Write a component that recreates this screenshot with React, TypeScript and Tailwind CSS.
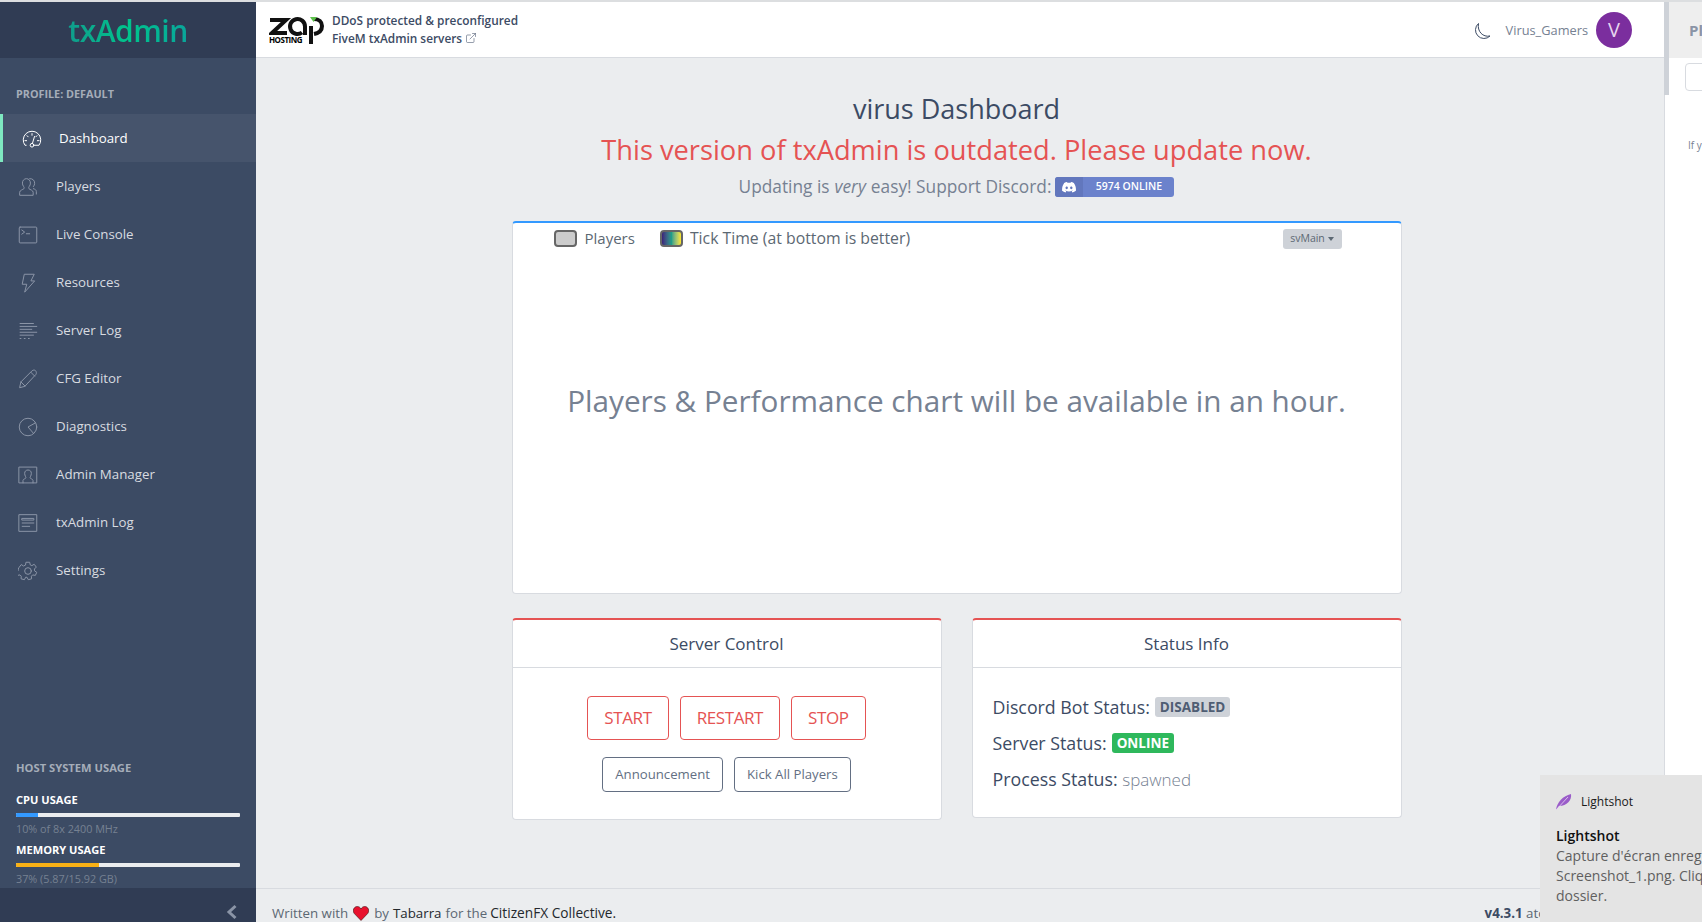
import React from 'react';
import { ExternalLink } from 'lucide-react';

const iconProps = {
  width: 20,
  height: 20,
  viewBox: '0 0 24 24',
  fill: 'none',
  stroke: 'currentColor',
  strokeWidth: 1.2,
  strokeLinecap: 'round' as const,
  strokeLinejoin: 'round' as const,
};

const GaugeIcon = () => (
  <svg {...iconProps}>
    <path d="M5 19.500H3.600A10.500 10.500 0 1 1 20.400 19.500H15" />
    <circle cx="12" cy="19.500" r="2.200" />
    <path d="M12.500 17.300 15 9M12 5.500v2M6 8l1.400 1.400M18 8l-1.400 1.400M3.500 14h2M18.500 14h2" />
  </svg>
);
const PlayersIcon = () => (
  <svg {...iconProps}>
    <path d="M2 21.500v-3.200c0-2.300 4-3.200 5-4.200.6-.8.4-1.800-.2-2.600-1-1.200-1.500-2.600-1.500-4.200 0-3 2-5.300 4.800-5.300s4.800 2.300 4.800 5.300c0 1.600-.5 3-1.500 4.200-.6.8-.8 1.800-.2 2.600 1 1 5 1.900 5 4.200v3.200z" />
    <path d="M14 2c3.200-.4 6 1.800 6 5.500 0 1.600-.6 2.800-1.500 4M18.500 14c2 .6 3.500 1.500 3.500 3.500v3" />
  </svg>
);
const ConsoleIcon = () => (
  <svg {...iconProps}>
    <rect x="1.500" y="2.500" width="21" height="19" rx="1" />
    <path d="m4.500 6 3.500 2.500L4.500 11M10 10.500h4" />
  </svg>
);
const BoltIcon = () => (
  <svg {...iconProps}>
    <path d="M8 1.500h11.500l-4 8h4.500L8 23l2.500-9.500H5.500z" />
  </svg>
);
const LogIcon = () => (
  <svg {...iconProps} strokeLinecap="butt">
    <path d="M2 3h17M2 6.500h21M2 10h15M2 13.500h21M2 17h17" />
    <path d="M2 21h2M7 21h2M12 21h2" />
  </svg>
);
const PencilIcon = () => (
  <svg {...iconProps}>
    <path d="M2 22l1.500-6.500L17 2c1.500-1 3-1 4 0s1.500 3 .5 4.500L8.500 20.500z" />
    <path d="M3.500 15.500l5 5M15.500 4l4.500 4.500" />
  </svg>
);
const PieIcon = () => (
  <svg {...iconProps}>
    <circle cx="12" cy="12" r="10.500" />
    <path d="M21 7l-9 5 6.500 7.500" />
  </svg>
);
const AdminIcon = () => (
  <svg {...iconProps}>
    <rect x="1.500" y="2.500" width="21" height="19" />
    <path d="M6 21.500v-3c0-1.500 3-2 3.500-3 .4-.8-1.500-2.500-1.500-5.500 0-2.500 1.600-4 4-4s4 1.500 4 4c0 3-1.900 4.700-1.500 5.500.5 1 3.500 1.500 3.500 3v3" />
  </svg>
);
const NewsIcon = () => (
  <svg {...iconProps}>
    <rect x="1.500" y="2" width="21" height="20" />
    <path d="M5 6.500h14v2H5zM5 12h14M5 16h9" />
  </svg>
);
const GearIcon = () => (
  <svg {...iconProps}>
    <circle cx="12" cy="12" r="4" />
    <path d="M10 1.500h4l.7 3.200 1.900.9 2.800-1.700 2.600 3.400-2.300 2.300.2 2.300 2.600 1.700-1.700 3.700-3.200-.6-1.500 1.500.2 3.200-4 1-1.500-2.900h-1.600l-1.500 2.900-4-1 .2-3.200-1.500-1.500-3.200.6-1.700-3.700 2.600-1.700.2-2.300L1.300 7.700l2.600-3.400 2.800 1.700 1.900-.9z" />
  </svg>
);

const navItems = [
  { label: 'Players', icon: <PlayersIcon /> },
  { label: 'Live Console', icon: <ConsoleIcon /> },
  { label: 'Resources', icon: <BoltIcon /> },
  { label: 'Server Log', icon: <LogIcon /> },
  { label: 'CFG Editor', icon: <PencilIcon /> },
  { label: 'Diagnostics', icon: <PieIcon /> },
  { label: 'Admin Manager', icon: <AdminIcon /> },
  { label: 'txAdmin Log', icon: <NewsIcon /> },
  { label: 'Settings', icon: <GearIcon /> },
];

const ZapLogo = () => (
  <div className="relative h-[30px] w-[56px] shrink-0">
    <svg width="56" height="30" viewBox="0 0 56 30" fill="none">
      <path d="M1 5h16L3 18h15" stroke="#111" strokeWidth="4" />
      <path d="M36 20V11.500a7.500 7.500 0 1 0-3 6" stroke="#111" strokeWidth="4" />
      <path d="M42 29V11M45 4c5 0 8 3 8 7s-3 7-8 8" stroke="#111" strokeWidth="4" />
      <path d="M41 2h7l-3.500 5z" fill="#5cc04a" />
    </svg>
    <span className="absolute left-0 top-[20px] text-[8px] font-bold leading-[10px] tracking-[-0.5px] text-black">
      HOSTING
    </span>
  </div>
);

const DiscordGlyph = () => (
  <svg width="14" height="11" viewBox="0 0 14 11" fill="white">
    <path d="M11.800 1A11 11 0 0 0 9 .1l-.4.7a10 10 0 0 0-3.200 0L5 .1A11 11 0 0 0 2.200 1C.4 3.600-.1 6.200.1 8.700A11 11 0 0 0 3.600 10.500l.7-1.200-1.100-.5.3-.2a8 8 0 0 0 7 0l.3.2-1.100.5.7 1.200a11 11 0 0 0 3.500-1.800C14.200 5.800 13.500 3.300 11.800 1zM4.700 7.200c-.7 0-1.200-.6-1.200-1.400s.5-1.400 1.200-1.400 1.200.6 1.200 1.400-.5 1.400-1.200 1.400zm4.600 0c-.7 0-1.200-.6-1.200-1.400s.5-1.400 1.200-1.400 1.200.6 1.200 1.400-.5 1.400-1.200 1.400z" />
  </svg>
);

const Usage = ({ title, detail, pct, barClass }: { title: string; detail: string; pct: number; barClass: string }) => (
  <div className="pt-[1px]">
    <div className="text-[11.100px] font-bold leading-[20px] text-white">{title}</div>
    <div className="mt-[3px] h-[4px] w-[224px] overflow-hidden rounded-[1px] bg-[#ebedef]">
      <div className={`h-full ${barClass}`} style={{ width: `${pct}%` }} />
    </div>
    <div className="mt-[2px] text-[10.800px] leading-[20px] text-[#768192]">{detail}</div>
  </div>
);

export default function App() {
  return (
    <div
      className="flex h-[922px] w-[1702px] flex-col overflow-hidden bg-white text-[#3c4b64]"
      style={{ fontFamily: '"Open Sans", "Noto Sans", sans-serif' }}
    >
      <div className="h-[2px] shrink-0 bg-[#dcdee0]" />
      <div className="relative flex min-h-0 flex-1">
        {/* Sidebar */}
        <aside className="flex w-[256px] shrink-0 flex-col bg-[#3c4b64]">
          <div className="flex h-[56px] shrink-0 items-center justify-center bg-[#303c54] pt-[1px]">
            <span className="bg-gradient-to-r from-[#0f9d8c] via-[#00c48c] to-[#0aa59a] bg-clip-text text-[30px] font-semibold leading-none tracking-[-0.5px] text-transparent">
              txAdmin
            </span>
          </div>
          <div className="flex h-[56px] shrink-0 items-center pl-[16px] pt-[16px] text-[10.800px] font-bold text-[#a5adb9]">
            PROFILE: DEFAULT
          </div>
          <nav className="flex flex-col text-[13.300px]">
            <div className="flex h-[48px] items-center border-l-[3px] border-[#7ee8c0] bg-[#46546c] pl-[19px] pt-[2px] text-white">
              <span className="w-[37px]">
                <GaugeIcon />
              </span>
              Dashboard
            </div>
            {navItems.map(item => (
              <div key={item.label} className="flex h-[48px] items-center pl-[18px] pt-[2px] text-[#d8dbe0]">
                <span className="w-[38px] text-[#8a94a6]">{item.icon}</span>
                {item.label}
              </div>
            ))}
          </nav>
          <div className="-mb-[1px] mt-auto px-[16px]">
            <div className="mb-[11px] text-[11.200px] font-bold leading-[20px] text-[#a5adb9]">HOST SYSTEM USAGE</div>
            <Usage title="CPU USAGE" detail="10% of 8x 2400 MHz" pct={10} barClass="bg-[#3399ff]" />
            <Usage title="MEMORY USAGE" detail="37% (5.87/15.92 GB)" pct={37} barClass="bg-[#f9b115]" />
          </div>
          <div className="flex h-[34px] shrink-0 items-center justify-end bg-[#303c54] pr-[18px] pt-[14px]">
            <svg width="12" height="16" viewBox="0 0 12 16" fill="none">
              <path d="M9.500 2 3 8l6.500 6" stroke="#8a94a6" strokeWidth="3" />
            </svg>
          </div>
        </aside>

        {/* Main */}
        <div className="flex min-w-0 flex-1 flex-col bg-[#ebedef]">
          <header className="flex h-[56px] shrink-0 items-center border-b border-[#d8dbe0] bg-white pl-[13px] pr-[32px]">
            <ZapLogo />
            <div className="mb-[2px] ml-[7px] text-[11.850px] font-semibold leading-[18px] text-[#3c4b64]">
              <div>DDoS protected &amp; preconfigured</div>
              <div className="flex items-center gap-[3px]">
                FiveM txAdmin servers <ExternalLink size={12} strokeWidth={1.2} className="text-[#4f5d73]" />
              </div>
            </div>
            <div className="ml-auto flex items-center">
              <svg width="20" height="20" viewBox="0 0 20 20" fill="none" className="mr-[14px] mt-[4px]">
                <path d="M6.500 1.500a8.500 8.500 0 1 0 11.500 12.500C11 15.500 5 9.500 6.500 1.500z" stroke="#3c4b64" strokeWidth="1" />
              </svg>
              <span className="mt-[3px] text-[12.800px] text-[#768192]">Virus_Gamers</span>
              <div className="ml-[8px] flex h-[36px] w-[36px] items-center justify-center rounded-full bg-[#7b2e9e] text-[20px] text-[#e6d5ee]">
                V
              </div>
            </div>
          </header>

          <main className="flex min-h-0 flex-1 flex-col items-center pr-[7px]">
            <h2 className="mt-[31px] text-[27px] font-medium leading-[40px] text-[#3c4b64]">virus Dashboard</h2>
            <h2 className="text-[27.250px] font-medium leading-[42px] text-[#e55353]">
              This version of txAdmin is outdated. Please update now.
            </h2>
            <div className="mt-[1px] flex h-[30px] items-center text-[17.300px] font-medium text-[#768192]">
              Updating is <i className="mx-[5px]">very</i> easy! Support Discord:
              <span className="ml-[4px] flex h-[20px] w-[119px] items-center overflow-hidden rounded-[3px] bg-[#6b82cc] text-[10.500px] font-semibold text-white">
                <span className="flex h-full w-[28px] items-center justify-center bg-[#6277bd]">
                  <DiscordGlyph />
                </span>
                <span className="flex-1 text-center">5974 ONLINE</span>
              </span>
            </div>

            <div className="mt-[19px] flex h-[373px] w-[890px] shrink-0 flex-col rounded-[4px] border border-t-2 border-[#d8dbe0] border-t-[#3399ff] bg-white">
              <div className="flex h-[28px] shrink-0 items-center pl-[41px] pr-[59px] pt-[2px] text-[15px] text-[#5c6873]">
                <span className="mr-[8px] h-[17px] w-[23px] rounded-[4px] border-2 border-[#666] bg-[#ccc]" />
                Players
                <span className="ml-[25px] mr-[7px] h-[17px] w-[23px] rounded-[4px] border-2 border-[#666] bg-gradient-to-r from-[#3b1f7a] via-[#1f9e89] to-[#fde725]" />
                <span className="mt-[2px] text-[15.800px]">Tick Time (at bottom is better)</span>
                <span className="ml-auto mt-[2px] flex h-[20px] w-[59px] items-center justify-center gap-[3px] rounded-[3px] bg-[#ced2d8] text-[10.500px] text-[#5c6873]">
                  svMain
                  <span className="h-0 w-0 border-x-[3px] border-t-[4px] border-x-transparent border-t-[#5c6873]" />
                </span>
              </div>
              <div className="flex flex-1 items-center justify-center pb-[42px] text-[29.700px] text-[#768192]">
                Players &amp; Performance chart will be available in an hour.
              </div>
            </div>

            <div className="mt-[24px] flex w-[890px] shrink-0 items-start gap-[30px]">
              <div className="h-[202px] w-[430px] rounded-[4px] border border-t-2 border-[#d8dbe0] border-t-[#e55353] bg-white">
                <div className="flex h-[48px] items-center justify-center border-b border-[#d8dbe0] text-[17px] font-medium">
                  Server Control
                </div>
                <div className="flex flex-col items-center pt-[28px]">
                  <div className="flex gap-[11px]">
                    {['START', 'RESTART', 'STOP'].map(label => (
                      <button
                        key={label}
                        className="h-[44px] rounded-[4px] border border-[#e55353] px-[16px] text-[17px] tracking-[-0.4px] text-[#e55353]"
                      >
                        {label}
                      </button>
                    ))}
                  </div>
                  <div className="mt-[17px] flex gap-[11px]">
                    {['Announcement', 'Kick All Players'].map(label => (
                      <button
                        key={label}
                        className="h-[35px] rounded-[4px] border border-[#636f83] px-[12px] text-[13.200px] text-[#636f83]"
                      >
                        {label}
                      </button>
                    ))}
                  </div>
                </div>
              </div>
              <div className="h-[200px] w-[430px] rounded-[4px] border border-t-2 border-[#d8dbe0] border-t-[#e55353] bg-white">
                <div className="flex h-[48px] items-center justify-center border-b border-[#d8dbe0] text-[17px] font-medium">
                  Status Info
                </div>
                <div className="flex flex-col gap-[16px] px-[20px] pt-[29px] text-[17.800px] font-medium leading-[20px]">
                  <div className="flex items-center">
                    Discord Bot Status:
                    <span className="ml-[5px] rounded-[3px] bg-[#ced2d8] px-[5px] text-[13.500px] font-bold text-[#4f5d73]">
                      DISABLED
                    </span>
                  </div>
                  <div className="flex items-center">
                    Server Status:
                    <span className="ml-[5px] rounded-[3px] bg-[#2eb85c] px-[5px] text-[13.500px] font-bold text-white">
                      ONLINE
                    </span>
                  </div>
                  <div>
                    Process Status: <span className="text-[17px] font-light text-[#768192]">spawned</span>
                  </div>
                </div>
              </div>
            </div>
          </main>

          <footer className="flex h-[34px] shrink-0 items-start justify-between border-t border-[#d8dbe0] pl-[16px] pr-[52px] pt-[14px] text-[13.300px] leading-[20px] text-[#5c6873]">
            <div className="flex items-center gap-[4px]">
              Written with
              <svg width="16" height="15" viewBox="0 0 16 15" className="mx-[1px]">
                <path d="M8 14.500 1.300 7.500C-1 4.500 1 .5 4.300.5 6 .5 7.300 1.500 8 3c.7-1.500 2-2.500 3.700-2.500C15 .5 17 4.500 14.700 7.500z" fill="#e8112d" stroke="#3a1010" strokeWidth="0.600" />
              </svg>
              by <span className="font-medium text-[#23282c]">Tabarra</span> for the
              <span className="-ml-[1px] text-[13.700px] font-medium text-[#23282c]">CitizenFX Collective.</span>
            </div>
            <div>
              <b className="font-bold text-[#3c4b64]">v4.3.1</b> atop FXServer
            </div>
          </footer>
        </div>

        {/* Cut-off side panel */}
        <div className="flex w-[38px] shrink-0 flex-col border-l border-[#d8dbe0] bg-white">
          <div className="flex h-[56px] shrink-0 items-center overflow-hidden bg-[#eeeeee] pl-[24px] text-[15px] font-bold text-[#8a94a6]">
            Pl
          </div>
          <div className="ml-[20px] mt-[5px] h-[28px] w-[40px] shrink-0 rounded-[4px] border border-[#d8dbe0]" />
          <div className="ml-[23px] mt-[47px] overflow-hidden whitespace-nowrap text-[10px] text-[#768192]">If y</div>
        </div>

        {/* Scrollbar thumb */}
        <div className="absolute left-[1664px] top-0 h-[93px] w-[5px] bg-[#ced2d8]" />

        {/* Windows toast */}
        <div className="absolute bottom-0 left-[1540px] h-[147px] w-[162px] overflow-hidden bg-[#e4e4e4] pl-[16px] pt-[18px]">
          <div className="flex items-center gap-[9px] text-[12px] text-[#1a1a1a]">
            <svg width="16" height="17" viewBox="0 0 16 17">
              <path d="M0 16C1 8 7 2 15 0c1 6-4 12-12 12z" fill="#9a5cc9" />
              <path d="M0 16 12 3" stroke="#e8d8f4" strokeWidth="0.800" />
            </svg>
            Lightshot
          </div>
          <div className="mt-[15px] w-[200px] text-[14px] leading-[20px] text-[#5f5f5f]">
            <div className="font-semibold text-[#111]">Lightshot</div>
            <div className="whitespace-nowrap">Capture d'écran enregistrée</div>
            <div className="whitespace-nowrap">Screenshot_1.png. Cliquez</div>
            <div>dossier.</div>
          </div>
        </div>
      </div>
    </div>
  );
}
